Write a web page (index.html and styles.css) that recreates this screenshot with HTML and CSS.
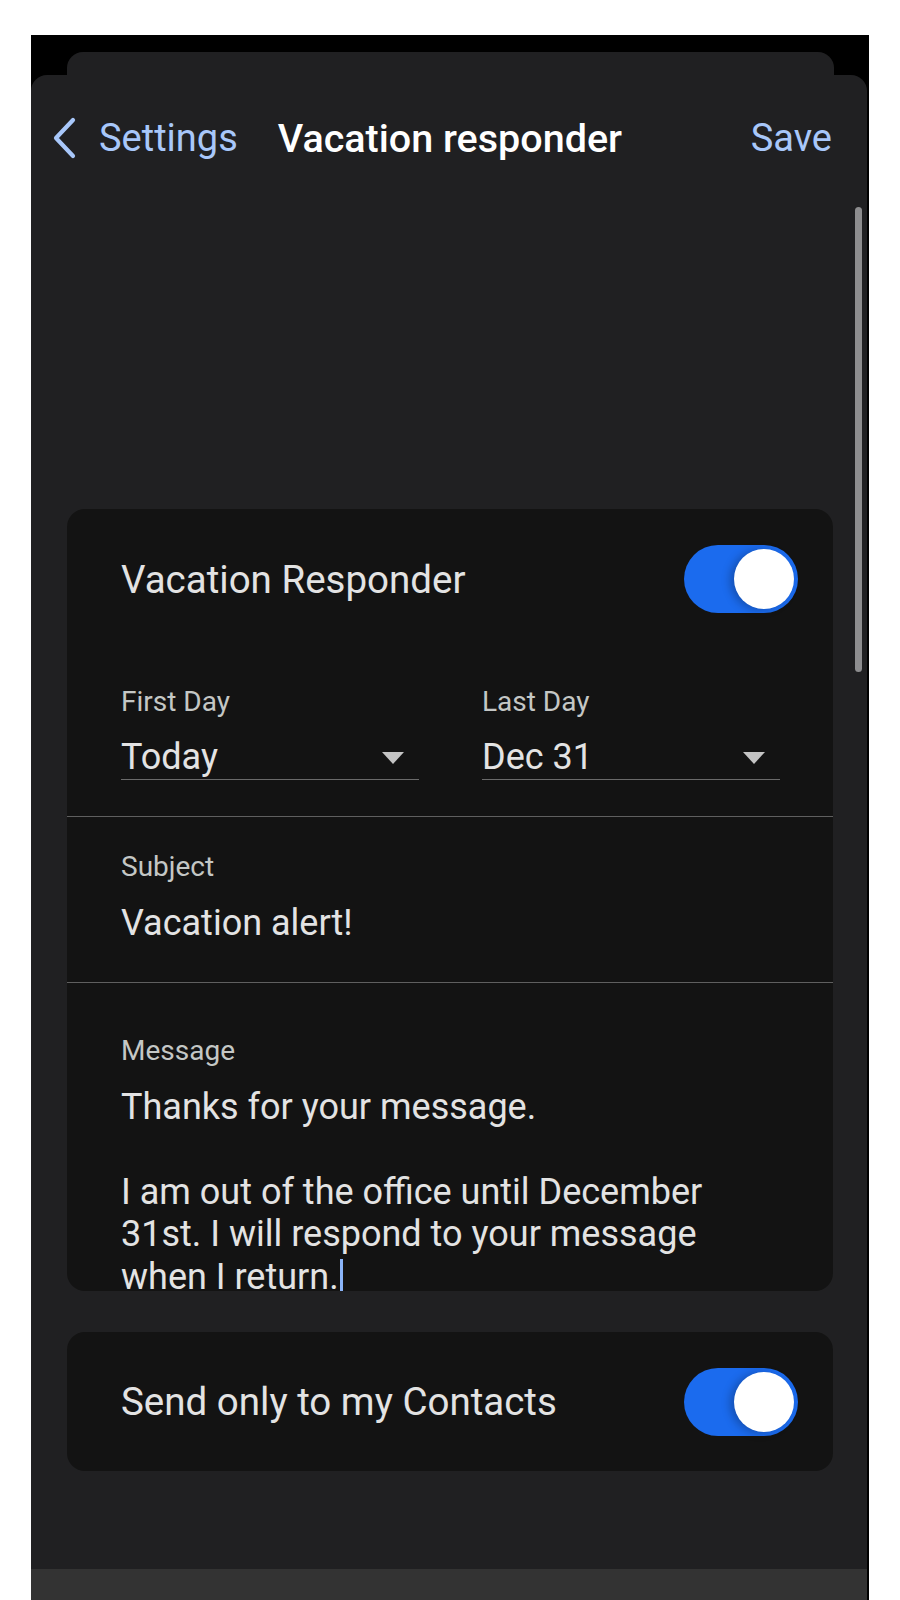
FILE: index.html
```html
<!DOCTYPE html>
<html lang="en">
  <head>
    <meta charset="UTF-8" />
    <meta name="viewport" content="width=device-width, initial-scale=1.0" />
    <title>Vacation responder</title>
    <link rel="stylesheet" href="styles.css">
  </head>
  <body>
    <div class="phone">
      <div class="sheet-behind"></div>
      <div class="sheet">
        <div class="scrollbar"></div>

        <header class="nav">
          <a class="back" href="#">
            <svg width="26" height="42" viewBox="0 0 26 42">
              <path d="M22 3 L5 21 L22 39" fill="none" stroke="#a8c7fa" stroke-width="4.2" stroke-linecap="round" stroke-linejoin="round" />
            </svg>
            <span>Settings</span>
          </a>
          <h1>Vacation responder</h1>
          <a class="save" href="#">Save</a>
        </header>

        <div class="card main-card">
          <div class="row toggle-row">
            <span class="row-title">Vacation Responder</span>
            <span class="switch on"><span class="knob"></span></span>
          </div>

          <div class="dates">
            <div class="date-field">
              <label>First Day</label>
              <div class="select">
                <span>Today</span>
                <span class="caret"></span>
              </div>
            </div>
            <div class="date-field">
              <label>Last Day</label>
              <div class="select">
                <span>Dec 31</span>
                <span class="caret"></span>
              </div>
            </div>
          </div>

          <div class="field subject">
            <label>Subject</label>
            <div class="value">Vacation alert!</div>
          </div>

          <div class="field message">
            <label>Message</label>
            <div class="value body-text">Thanks for your message.<br><br>I am out of the office until December 31st. I will respond to your message when I return.<span class="cursor"></span></div>
          </div>
        </div>

        <div class="card contacts-card">
          <div class="row">
            <span class="row-title">Send only to my Contacts</span>
            <span class="switch on"><span class="knob"></span></span>
          </div>
        </div>

        <div class="bottom-bar"></div>
      </div>
    </div>
  </body>
</html>
```

FILE: styles.css
```css
body {
  margin: 0;
  background: #fff;
  font-family: Roboto, "Liberation Sans", sans-serif;
  overflow: hidden;
}
.phone {
  margin: 35px 0 0 31px;
  width: 838px;
  height: 1565px;
  background: #000;
  display: flex;
  flex-direction: column;
}
.sheet-behind {
  margin: 17px 35px 0 36px;
  height: 23px;
  background: #202022;
  border-radius: 16px 16px 0 0;
}
.sheet {
  position: relative;
  flex: 1;
  margin-right: 2px;
  background: #202022;
  border-radius: 16px 16px 0 0;
  display: flex;
  flex-direction: column;
}
.scrollbar {
  position: absolute;
  right: 5px;
  top: 132px;
  width: 7px;
  height: 465px;
  border-radius: 4px;
  background: #8d8d8f;
}
.nav {
  display: flex;
  align-items: center;
  height: 46px;
  margin-top: 40px;
  padding: 0 35px 0 20px;
}
.nav a {
  text-decoration: none;
  color: #a8c7fa;
  font-size: 38px;
}
.back {
  display: flex;
  align-items: center;
}
.back svg {
  margin-right: 22px;
}
.nav h1 {
  margin: 0 0 0 40px;
  font-size: 39.5px;
  font-weight: 500;
  color: #fff;
}
.save {
  margin-left: auto;
}
.card {
  margin: 0 34px 0 36px;
  background: #131313;
  border-radius: 18px;
  color: #e3e3e3;
}
.main-card {
  margin-top: 348px;
  height: 782px;
  overflow: hidden;
}
.row {
  display: flex;
  align-items: center;
  justify-content: space-between;
  padding: 0 35px 0 54px;
}
.toggle-row {
  padding-top: 36px;
}
.row-title {
  font-size: 38.5px;
}
.switch {
  width: 114px;
  height: 68px;
  border-radius: 34px;
  background: #1b6bee;
  display: flex;
  align-items: center;
  justify-content: flex-end;
  padding: 0 4px;
  box-sizing: border-box;
}
.knob {
  width: 60px;
  height: 60px;
  border-radius: 50%;
  background: #fff;
  box-shadow: -4px 1px 8px rgba(0, 0, 0, 0.25);
}
label {
  display: block;
  font-size: 28px;
  line-height: 32px;
  color: #c4c7c5;
}
.dates {
  display: flex;
  gap: 63px;
  padding: 73px 53px 36px 54px;
  border-bottom: 1px solid #5f5f5f;
}
.date-field {
  flex: 1;
}
.select {
  margin-top: 18px;
  display: flex;
  align-items: center;
  justify-content: space-between;
  font-size: 36px;
  line-height: 43px;
  border-bottom: 1px solid #6a6a6a;
  padding-right: 15px;
}
.caret {
  width: 0;
  height: 0;
  border-left: 11.5px solid transparent;
  border-right: 11.5px solid transparent;
  border-top: 12px solid #c4c4c4;
}
.field {
  padding: 34px 54px 37px;
}
.field .value {
  margin-top: 18px;
  font-size: 36px;
  line-height: 44px;
}
.subject {
  border-bottom: 1px solid #5f5f5f;
}
.message {
  padding-top: 52px;
}
.message .value {
  margin-top: 19px;
  line-height: 42.4px;
  padding-right: 20px;
}
.cursor {
  display: inline-block;
  width: 3px;
  height: 40px;
  margin-left: 1px;
  vertical-align: -10px;
  background: #8ab4f8;
}
.contacts-card {
  margin-top: 41px;
  height: 139px;
  display: flex;
  flex-direction: column;
  justify-content: center;
}
.bottom-bar {
  margin-top: auto;
  height: 31px;
  background: #333;
}
```
